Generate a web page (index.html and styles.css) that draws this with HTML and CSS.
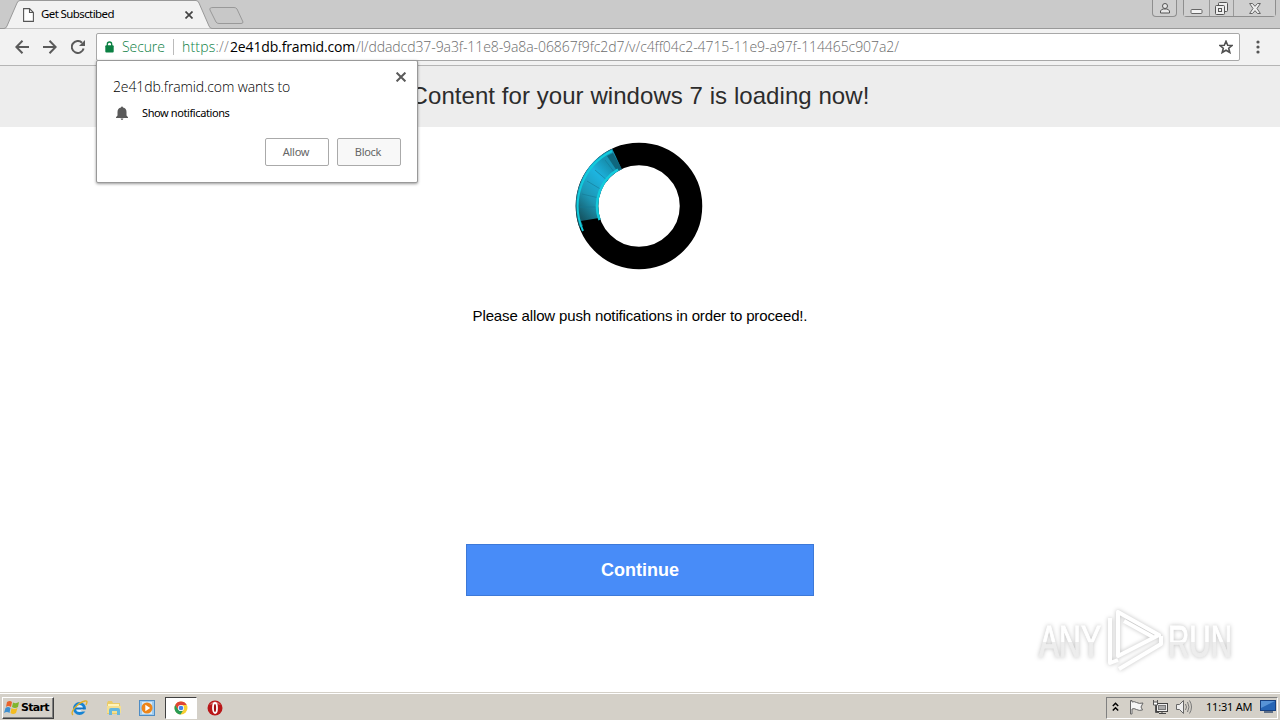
FILE: index.html
```html
<!DOCTYPE html>
<html lang="en">
<head>
  <meta charset="UTF-8">
  <title>Get Subsctibed</title>
  <link rel="stylesheet" href="styles.css">
</head>
<body>

  <div class="tabstrip">
    <svg class="tab-shape" width="250" height="29" viewBox="0 0 250 29">
      <path d="M0 28.5H4Q6 28.5 7 26L17 3Q18 .5 20 .5H196Q198 .5 199 3L209 26Q210 28.5 212 28.5H250V29H0Z" fill="#f2f2f2" stroke="#999"/>
      <path d="M213 7.500H234Q236 7.500 237 9L243 22Q243 23.500 241 23.500H219Q217 23.500 216 22L210 10Q209 7.500 213 7.500Z" fill="#c8c8c8" stroke="#999"/>
    </svg>
    <div class="tab">
      <svg width="11" height="14" viewBox="0 0 11 14"><path d="M.6.6H6.500L10.400 4.500V13.400H.6ZM6.500.6V4.500H10.400" fill="#fff" stroke="#555" stroke-width="1.100"/></svg>
      <span class="tab-title">Get Subsctibed</span>
      <svg class="tab-close" width="8" height="8" viewBox="0 0 8 8"><path d="M.5.5L7.500 7.500M7.500.5L.5 7.500" stroke="#444" stroke-width="1.700"/></svg>
    </div>
    <div class="window-buttons">
      <span class="win user"><svg width="12" height="12" viewBox="0 0 12 12" fill="#e8e8e8" stroke="#555"><circle cx="6" cy="4" r="2.500"/><path d="M1.500 11V9Q2.500 7 4.500 7H7.500Q9.500 7 10.500 9V11Z"/></svg></span>
      <span class="win-group">
        <span class="win min"><svg width="13" height="12" viewBox="0 0 13 12"><rect x="1" y="7.500" width="11" height="4" rx="1" fill="#f3f3f3" stroke="#666"/></svg></span>
        <span class="win max"><svg width="13" height="13" viewBox="0 0 13 13" fill="#eee" stroke="#555"><rect x="3.500" y=".5" width="9" height="9" rx="1"/><rect x=".5" y="3.500" width="9" height="9" rx="1"/><rect x="3.500" y="6.500" width="3" height="3"/></svg></span>
        <span class="win close"><svg width="12" height="11" viewBox="0 0 12 11"><path d="M.6.5H3.500L6 3.300L8.500.5H11.400L8 5.500L11.400 10.500H8.500L6 7.700L3.500 10.500H.6L4 5.500Z" fill="#eee" stroke="#666"/></svg></span>
      </span>
    </div>
  </div>

  <div class="toolbar">
    <svg class="nav-icon" width="14" height="14" viewBox="0 0 14 14"><path d="M14 7H1.500M7.500 .8L1.300 7L7.500 13.200"/></svg>
    <svg class="nav-icon forward" width="14" height="14" viewBox="0 0 14 14"><path d="M0 7H12.500M6.500 .8L12.700 7L6.500 13.200"/></svg>
    <svg class="nav-icon reload" width="14" height="14" viewBox="0 0 14 14"><path d="M12.600 8.500A6 6 0 1 1 11 2.700"/><path class="solid" d="M14 0V6H8Z"/></svg>
    <div class="omnibox">
      <svg class="lock" width="9" height="12" viewBox="0 0 9 12"><path d="M2.300 5V3.200A2.200 2.200 0 0 1 6.700 3.200V5" fill="none" stroke="#0b8043" stroke-width="1.300"/><rect x=".3" y="4.300" width="8.400" height="7.200" rx="1" fill="#0b8043"/></svg>
      <span class="secure">Secure</span>
      <span class="divider"></span>
      <span class="scheme">https<i>://</i></span>
      <span class="host">2e41db.framid.com</span>
      <span class="path">/l/ddadcd37-9a3f-11e8-9a8a-06867f9fc2d7/v/c4ff04c2-4715-11e9-a97f-114465c907a2/</span>
      <svg class="star" width="14" height="14" viewBox="0 0 14 14"><path d="M7 1.300L8.700 5.200L13 5.500L9.700 8.200L10.800 12.500L7 10.200L3.200 12.500L4.300 8.200L1 5.500L5.300 5.200Z" fill="none" stroke="#505050" stroke-width="1.600"/></svg>
    </div>
    <svg class="menu" width="4" height="14" viewBox="0 0 4 14" fill="#555"><circle cx="2" cy="2" r="1.600"/><circle cx="2" cy="7" r="1.600"/><circle cx="2" cy="12" r="1.600"/></svg>
  </div>

  <main class="page">
    <h1 class="heading">Content for your windows 7 is loading now!</h1>
    <svg class="loader" width="128" height="128" viewBox="0 0 128 128">
      <defs>
        <linearGradient id="glow" x1="0" y1="1" x2=".5" y2="0">
          <stop offset="0" stop-color="#155867"/>
          <stop offset=".35" stop-color="#1d96b4"/>
          <stop offset=".75" stop-color="#1db4e0"/>
          <stop offset="1" stop-color="#1793b4"/>
        </linearGradient>
      </defs>
      <circle cx="64" cy="64" r="52" fill="none" stroke="#000" stroke-width="22.500"/>
      <path d="M15 81.500A52 52 0 0 1 42 17" fill="none" stroke="url(#glow)" stroke-width="22.500"/>
      <path d="M6 79L24 76L27 86L12 93Z" fill="#000"/>
      <path d="M5 65L23 65M7 52L24 56M12 39L27 48M20 28L33 39M30 18L40 31" stroke="#157995" stroke-width="1" opacity=".6"/>
      <path d="M32 14L42 29L47 27L38 11Z" fill="#0b5061" opacity=".65"/>
      <path d="M8 89A61.500 61.500 0 0 1 37 9" fill="none" stroke="#12cbdc" stroke-width="2"/>
      <path d="M24.500 78A42 42 0 0 1 43 27.500" fill="none" stroke="#14cbdc" stroke-width="2.500"/>
    </svg>
    <p class="message">Please allow push notifications in order to proceed!.</p>
    <button class="continue">Continue</button>
  </main>

  <div class="permission">
    <svg class="permission-close" width="10" height="10" viewBox="0 0 10 10"><path d="M.6.6L9.400 9.400M9.400.6L.6 9.400" stroke="#5a5a5a" stroke-width="2"/></svg>
    <div class="permission-title">2e41db.framid.com wants to</div>
    <div class="permission-row">
      <svg width="12" height="14" viewBox="0 0 12 14" fill="#5a5a5a"><path d="M5 1.500Q5 .4 6 .4T7 1.500Q10.500 2.200 10.500 6V9.500L12 11.300V12H0V11.300L1.500 9.500V6Q1.500 2.200 5 1.500ZM4.600 12.600H7.400Q7.200 14 6 14T4.600 12.600Z"/></svg>
      <span>Show notifications</span>
    </div>
    <div class="permission-actions">
      <button class="allow">Allow</button>
      <button class="block">Block</button>
    </div>
  </div>

  <svg class="watermark" width="224" height="74" viewBox="0 0 224 74">
    <defs>
      <linearGradient id="fade" x1="0" y1="0" x2="0" y2="1">
        <stop offset=".5" stop-color="#fff"/>
        <stop offset=".52" stop-color="#ededed"/>
      </linearGradient>
    </defs>
    <text x="7" y="53" textLength="62" lengthAdjust="spacingAndGlyphs" fill="url(#fade)" stroke="url(#fade)">ANY</text>
    <text x="136" y="53" textLength="64" lengthAdjust="spacingAndGlyphs" fill="url(#fade)" stroke="url(#fade)">RUN</text>
    <g class="mark">
      <path d="M78 14V59L86 56"/>
      <path d="M86 8V52L127 31Z"/>
      <path d="M92 17L121 33M87 65L129 40V32"/>
    </g>
  </svg>

  <div class="taskbar">
    <div class="start">
      <svg width="16" height="16" viewBox="0 0 16 16"><path d="M3 2Q6 0 8 2L7 7Q4 5 2 7Z" fill="#e9632b"/><path d="M9 2.500Q12 4 15 2L14 7Q11 9 8 7Z" fill="#80b52d"/><path d="M1.500 8Q4 6 6.500 8L5.500 13Q3 11 0 13Z" fill="#3e8fd0"/><path d="M7.500 8Q10 10 13.500 8L12 13Q9 15 6.500 13Z" fill="#f4bc20"/></svg>
      <b>Start</b>
    </div>
    <div class="launch">
      <span class="app"><svg width="17" height="16" viewBox="0 0 17 16"><circle cx="8.500" cy="8.500" r="5" fill="#d9efff" stroke="#1683d3" stroke-width="3"/><path d="M5 8.500H13.500" stroke="#1571bd" stroke-width="2"/><path d="M10 10.500H15" stroke="#d4d0c8" stroke-width="2"/><path d="M2 15C-2 12 8 2 14 1C17 .5 16 3 15 5" fill="none" stroke="#e0ae25" stroke-width="1.300"/></svg></span>
      <span class="app"><svg width="16" height="16" viewBox="0 0 16 16"><path d="M1 3L2 1H6L7 3H14V14H1Z" fill="#eacb68"/><path d="M2 4H13V7H2Z" fill="#fff4b9"/><path d="M1 6H15V13H1Z" fill="#f4df8f"/><path d="M3 15V10Q3 8 5 8H12Q14 8 14 10V15H11V11H6V15Z" fill="#64b7df"/></svg></span>
      <span class="app"><svg width="16" height="16" viewBox="0 0 16 16"><rect x=".5" y=".5" width="15" height="15" fill="#9fcbee" stroke="#4e8cc4"/><rect x="3" y="2" width="10" height="12" fill="#d5eaf8"/><circle cx="8" cy="8" r="5.500" fill="#ed8519"/><path d="M6.300 4.800V11.200L11.200 8Z" fill="#fff"/></svg></span>
      <span class="app active"><svg width="14" height="14" viewBox="0 0 14 14"><circle cx="7" cy="7" r="6.500" fill="#f8cf32"/><path d="M1.200 4A6.500 6.500 0 0 1 12.700 4H7L4 8.700Z" fill="#df4436"/><path d="M1.200 4A6.500 6.500 0 0 0 6.500 13.500L9.500 8.700L4 8.500Z" fill="#299b55"/><circle cx="7" cy="7" r="3.100" fill="#fff"/><circle cx="7" cy="7" r="2.300" fill="#4384ec"/></svg></span>
      <span class="app"><svg width="16" height="16" viewBox="0 0 16 16"><circle cx="8" cy="8" r="7.500" fill="#b91719"/><path d="M2 5Q8-2 14 5Q8 3 2 5Z" fill="#d86a68"/><ellipse cx="8" cy="8" rx="2" ry="5" fill="#a00d10" stroke="#fff" stroke-width="1.800"/></svg></span>
    </div>
    <div class="tray">
      <svg class="chevrons" width="7" height="10" viewBox="0 0 7 10"><path d="M.8 4L3.500 1.300L6.200 4M.8 8.500L3.500 5.800L6.200 8.500" fill="none" stroke="#000" stroke-width="1.500"/></svg>
      <svg class="flag" width="16" height="16" viewBox="0 0 16 16"><path d="M2.500 15V1.500H4V3Q6 2 8.500 3.500Q11 5 15 4L13 8L14.500 11Q11 12 8.500 10.500Q6 9 4 10V15Z" fill="#f5f5f5" stroke="#666"/></svg>
      <svg class="network" width="16" height="16" viewBox="0 0 16 16"><rect x="4.500" y="4.500" width="11" height="8" fill="#eee" stroke="#444"/><rect x="6.500" y="6.500" width="7" height="4" fill="#aaa" stroke="#777"/><path d="M7 14.500H14M10 13V15" stroke="#444"/><path d="M1.500 1V5.500H5.500V1M3.500 6V13.500H7" fill="none" stroke="#555"/><path d="M1.500 3H5.500V6H1.500Z" fill="#fff" stroke="#555"/></svg>
      <svg class="sound" width="16" height="16" viewBox="0 0 16 16"><path d="M.5 5.500H3.500L7.500 1.500V14.500L3.500 10.500H.5Z" fill="#eee" stroke="#666"/><path d="M9.500 5Q11.500 8 9.500 11M11.500 3Q14.500 8 11.500 13M13.500 1.500Q17.500 8 13.500 14.500" fill="none" stroke="#777"/></svg>
      <span class="clock">11:31 AM</span>
      <svg class="desktop" width="16" height="13" viewBox="0 0 16 13"><rect x=".5" y=".5" width="15" height="10" fill="#2665b5" stroke="#174080"/><path d="M1 1H15L1 8Z" fill="#5793d6"/><path d="M4 12H13" stroke="#384f70" stroke-width="1.500"/></svg>
    </div>
  </div>

</body>
</html>
```
FILE: styles.css
```css
* {
  box-sizing: border-box;
}
body {
  margin: 0;
  width: 1280px;
  height: 720px;
  overflow: hidden;
  position: relative;
  display: flex;
  flex-direction: column;
  background: #fff;
  font-family: "Liberation Sans", Arial, sans-serif;
}
svg {
  display: block;
  flex: none;
}
span, .permission-title {
  white-space: nowrap;
}
.tabstrip {
  height: 29px;
  flex: none;
  position: relative;
  display: flex;
  justify-content: space-between;
  background: #cacaca;
  border-bottom: 1px solid #999;
}
.tab-shape {
  position: absolute;
  left: 0;
  top: 0;
}
.tab {
  position: relative;
  display: flex;
  align-items: center;
  width: 193px;
  height: 29px;
  padding-left: 23px;
}
.tab-title {
  margin-left: 7px;
  width: 73px;
  padding-bottom: 2px;
  font: 11.5px "Noto Sans", sans-serif;
  letter-spacing: -0.6px;
  color: #000;
}
.tab-close {
  margin-left: auto;
}
.window-buttons {
  display: flex;
  gap: 6px;
  padding-right: 4px;
}
.win-group {
  display: flex;
  height: 17px;
  border: 1px solid #8e8e8e;
  border-top: 0;
  border-radius: 0 0 4px 4px;
}
.win {
  display: flex;
  align-items: center;
  justify-content: center;
  height: 16px;
  background: #cfcfcf;
}
.user {
  width: 25px;
  height: 17px;
  border: 1px solid #8e8e8e;
  border-top: 0;
  border-radius: 0 0 4px 4px;
}
.min {
  width: 25px;
}
.max {
  width: 25px;
  border-left: 1px solid #999;
  border-right: 1px solid #999;
}
.close {
  width: 41px;
}
.toolbar {
  height: 37px;
  flex: none;
  display: flex;
  align-items: center;
  padding-left: 15px;
  background: #f2f2f2;
  border-bottom: 1px solid #b5b5b5;
}
.nav-icon {
  fill: none;
  stroke: #5a5a5a;
  stroke-width: 2;
}
.nav-icon .solid {
  fill: #5a5a5a;
  stroke: none;
}
.forward, .reload {
  margin-left: 14px;
}
.omnibox {
  width: 1144px;
  height: 28px;
  margin-left: 11px;
  padding-bottom: 1px;
  display: flex;
  align-items: center;
  background: #fff;
  border: 1px solid #a8a8a8;
  border-radius: 2px;
  font: 300 14px "Open Sans", "Noto Sans", sans-serif;
}
.lock {
  margin-left: 8px;
}
.secure {
  width: 43px;
  margin-left: 8px;
  letter-spacing: -0.1px;
  color: #0b8043;
}
.divider {
  width: 1px;
  height: 16px;
  margin: 0 8px;
  background: #bbb;
}
.scheme {
  width: 48px;
  letter-spacing: 0.2px;
  color: #0b8043;
}
.scheme i {
  font-style: normal;
  color: #777;
}
.host {
  width: 126px;
  font-weight: 400;
  letter-spacing: -0.15px;
  color: #000;
}
.path {
  letter-spacing: -0.08px;
  color: #6c6c6c;
}
.star {
  margin: 0 6px 0 auto;
}
.menu {
  margin-left: 16px;
}
.page {
  height: 626px;
  flex: none;
  display: flex;
  flex-direction: column;
  align-items: center;
}
.heading {
  width: 100%;
  height: 61px;
  margin: 0;
  background: #ededed;
  color: #2c2c2c;
  font-size: 24px;
  font-weight: 400;
  line-height: 60px;
  letter-spacing: 0.06px;
  text-align: center;
}
.loader {
  margin: 15px 2px 0 0;
}
.message {
  height: 20px;
  margin: 36px 0 0;
  font-size: 15px;
  line-height: 20px;
  letter-spacing: -0.15px;
  color: #000;
}
.continue {
  width: 348px;
  height: 52px;
  margin-top: 218px;
  padding: 0;
  background: #488cf8;
  border: 1px solid #3d79d8;
  color: #fff;
  font: bold 18px "Liberation Sans", Arial, sans-serif;
}
/* notification prompt, hangs from the address bar */
.permission {
  position: absolute;
  left: 96px;
  top: 60px;
  width: 322px;
  height: 123px;
  padding: 16px 16px 17px;
  background: #fff;
  border: 1px solid #999;
  border-radius: 2px;
  box-shadow: 0 1px 3px rgba(0,0,0,0.4);
  font: 11px "Noto Sans", sans-serif;
  color: #000;
}
.permission-close {
  position: absolute;
  right: 11px;
  top: 11px;
}
.permission-title {
  font: 300 14px/20px "Open Sans", sans-serif;
  letter-spacing: -0.12px;
}
.permission-row {
  display: flex;
  align-items: center;
  gap: 14px;
  height: 16px;
  margin-top: 8px;
  padding-left: 3px;
  letter-spacing: -0.4px;
}
.permission-row span {
  padding-bottom: 2px;
}
.permission-actions {
  display: flex;
  justify-content: flex-end;
  gap: 8px;
  margin-top: 17px;
}
.permission-actions button {
  width: 64px;
  height: 28px;
  padding: 0 2px 2px 0;
  background: #fff;
  border: 1px solid #aaa;
  border-radius: 2px;
  color: #666;
  font: 11px "Noto Sans", sans-serif;
  letter-spacing: -0.3px;
}
.permission-actions .block {
  background: #f8f8f8;
}
.watermark {
  position: absolute;
  left: 1032px;
  top: 604px;
  filter: drop-shadow(0 0 2px rgba(0,0,0,0.25));
  font: 44px "Liberation Sans", sans-serif;
}
.watermark .mark {
  fill: none;
  stroke: #fff;
  stroke-width: 4;
  stroke-linejoin: round;
}
.taskbar {
  height: 28px;
  flex: none;
  display: flex;
  align-items: center;
  padding: 2px 0 0 2px;
  background: #d4d0c8;
  border-top: 1px solid #d4d0c8;
  box-shadow: inset 0 1px 0 #fff;
}
.start {
  display: flex;
  align-items: center;
  gap: 1px;
  width: 52px;
  height: 22px;
  padding-left: 1px;
  border: 1px solid;
  border-color: #fff #404040 #404040 #fff;
  box-shadow: inset -1px -1px 0 #808080;
}
.start b {
  font: bold 11px "DejaVu Sans", sans-serif;
  letter-spacing: -0.7px;
}
.launch {
  display: flex;
  gap: 2px;
  margin-left: 10px;
}
.app {
  display: flex;
  align-items: center;
  justify-content: center;
  width: 31.7px;
  height: 22px;
}
.app.active {
  background: #fff;
  border: 1px solid;
  border-color: #404040 #fff #fff #404040;
}
.tray {
  display: flex;
  align-items: center;
  width: 172px;
  height: 22px;
  margin-left: auto;
  margin-right: 2px;
  padding: 0 0 2px 5px;
  border: 1px solid;
  border-color: #808080 #fff #fff #808080;
}
.flag {
  margin-left: 9px;
}
.network, .sound {
  margin-left: 8px;
}
.clock {
  width: 47px;
  margin-left: 14px;
  font: 11px "Noto Sans", sans-serif;
  letter-spacing: -0.2px;
}
.desktop {
  margin-left: 7px;
}
```
